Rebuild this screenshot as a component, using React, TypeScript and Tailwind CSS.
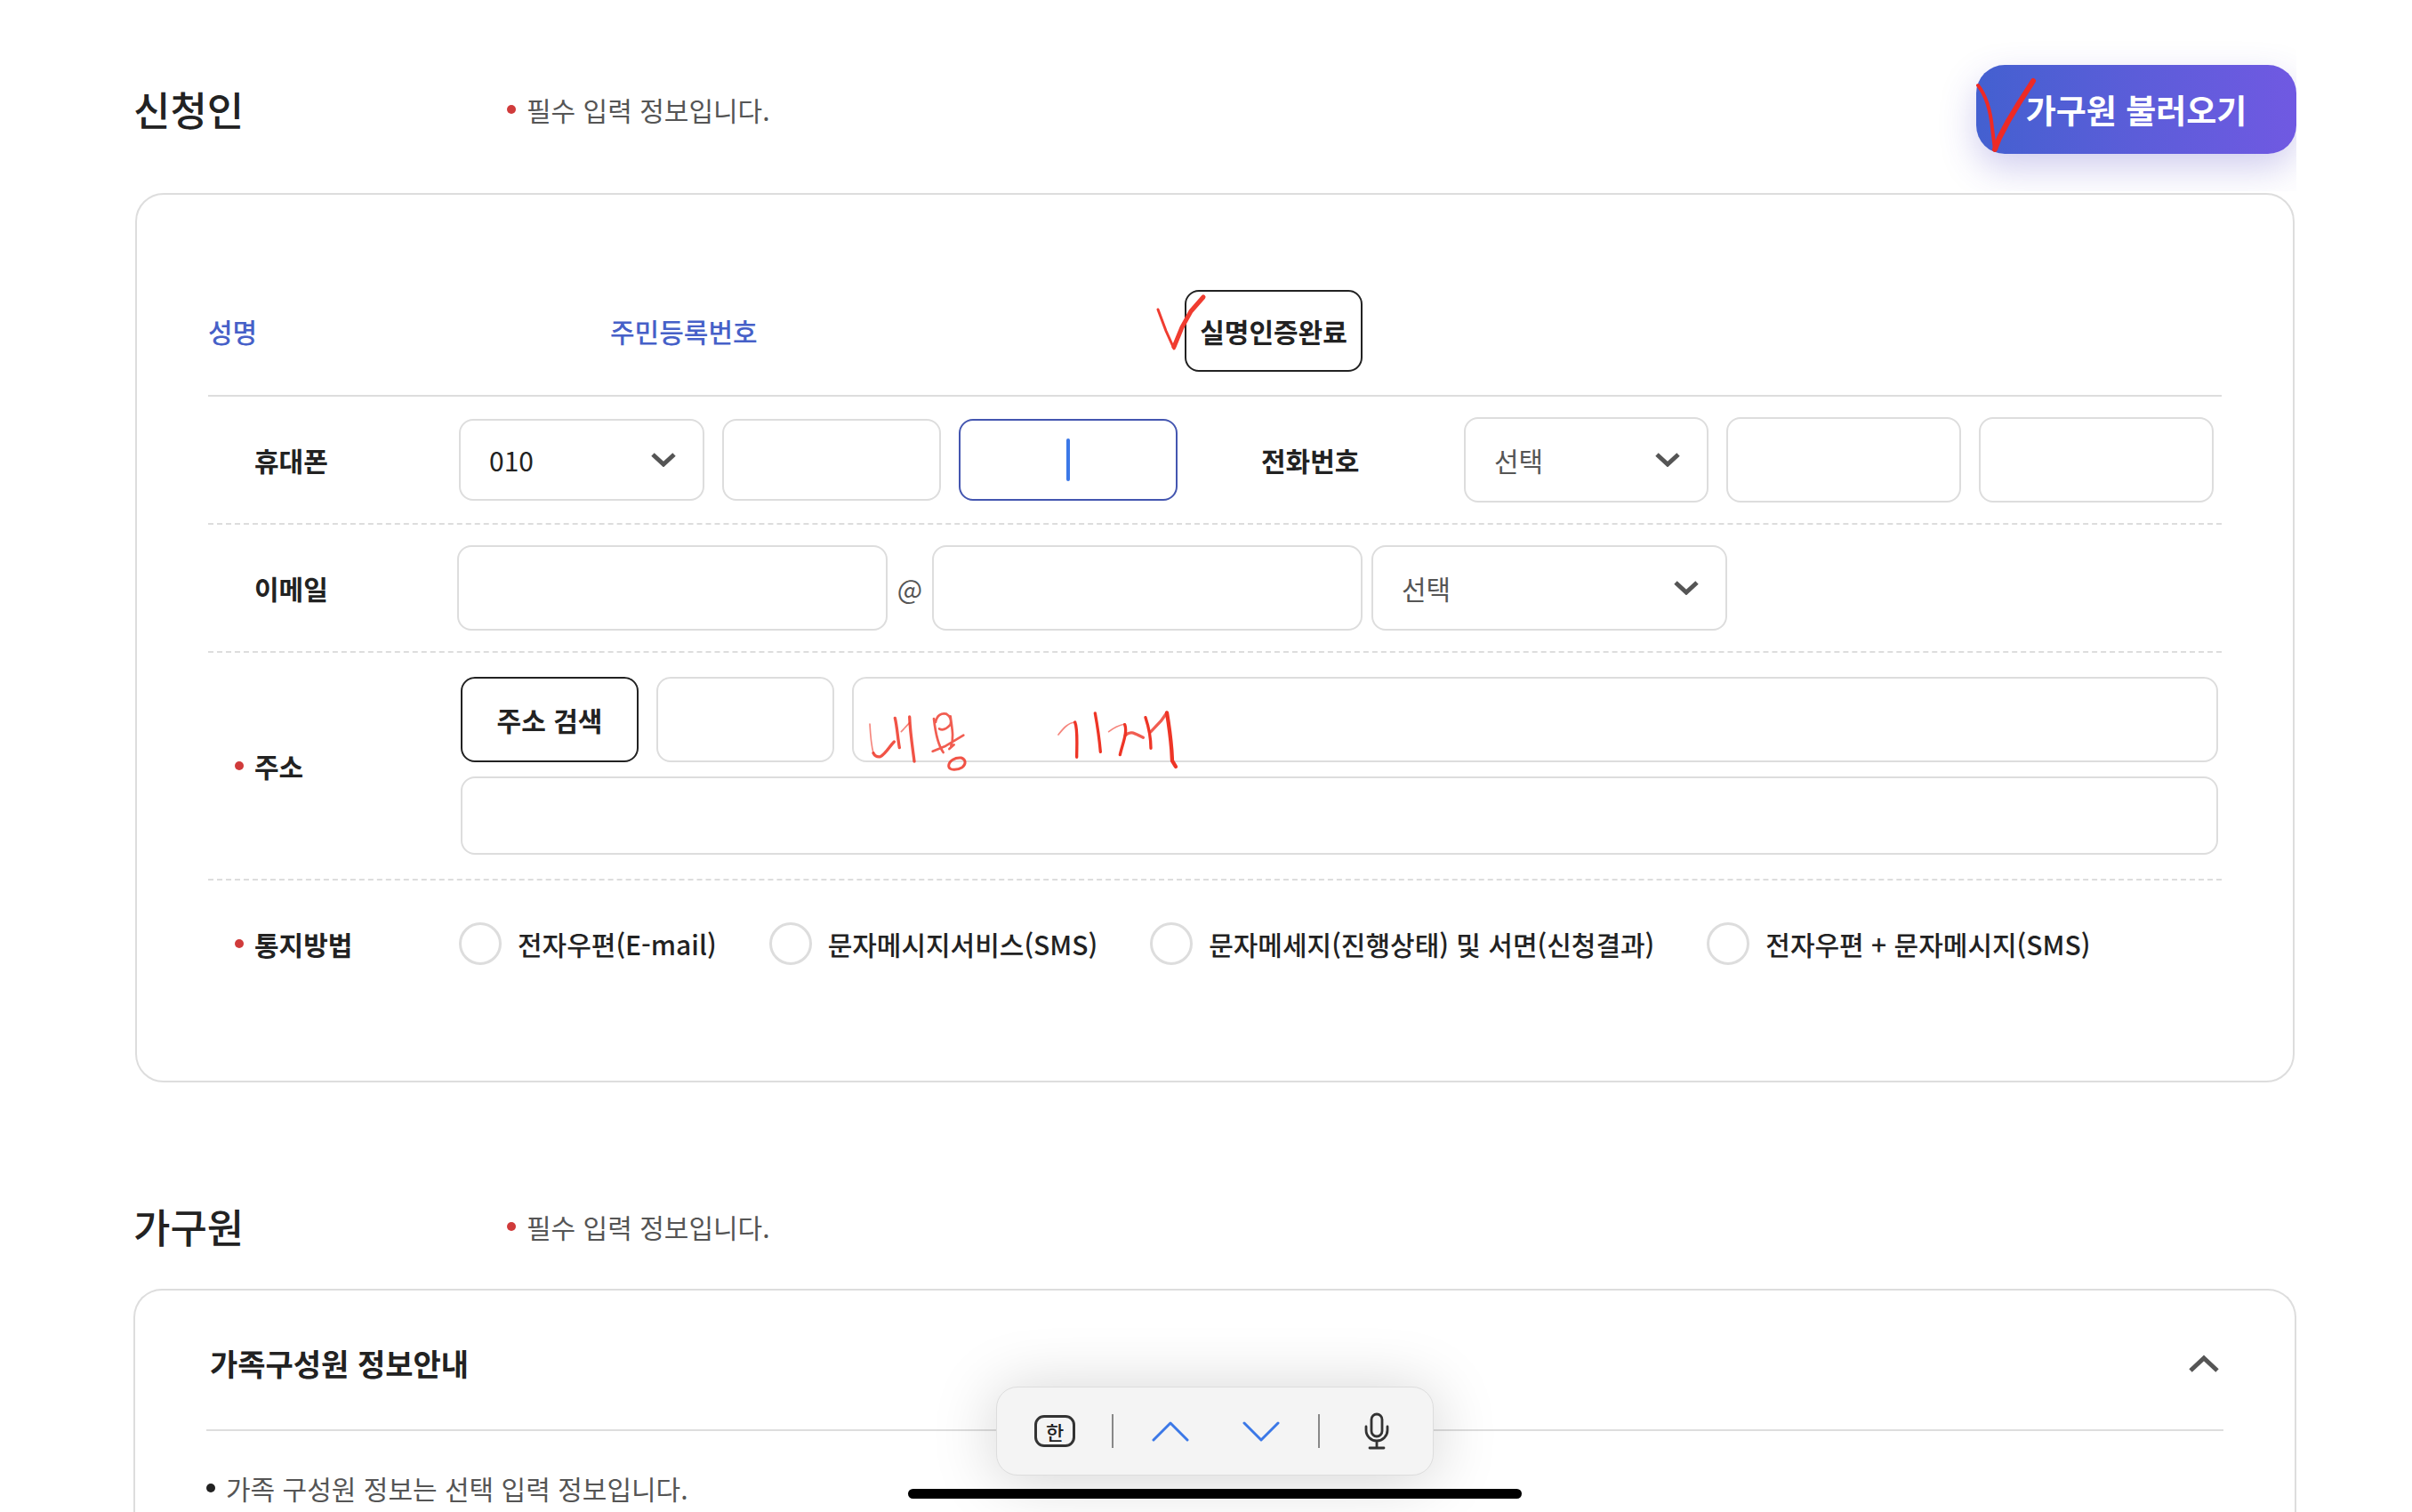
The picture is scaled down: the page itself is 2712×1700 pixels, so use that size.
import React from "react";

const box = "min-w-0 rounded-2xl border-2 border-[#ddd] bg-white px-8 text-[30px] text-[#222] outline-none";

function Chevron() {
  return (
    <svg viewBox="0 0 28 16" className="h-4 w-7" fill="none" stroke="#555" strokeWidth="5">
      <path d="M2 2 14 13 26 2" />
    </svg>
  );
}

function Select({ label, value, className, dark }: { label: string; value: string; className: string; dark?: boolean }) {
  return (
    <div className={`relative ${className}`}>
      <select
        aria-label={label}
        className={`h-full w-full appearance-none rounded-2xl border-2 border-[#ddd] bg-white pl-8 pr-20 text-[30px] ${dark ? "text-[#222]" : "text-[#555]"}`}
      >
        <option>{value}</option>
      </select>
      <span className="pointer-events-none absolute inset-y-0 right-8 flex items-center">
        <Chevron />
      </span>
    </div>
  );
}

function Label({ children, required, htmlFor, id }: { children: React.ReactNode; required?: boolean; htmlFor?: string; id?: string }) {
  return (
    <div className="flex w-[284px] shrink-0 items-center pl-[30px]">
      {required && <span className="mr-3 size-[10px] shrink-0 rounded-full bg-[#d03b3b]" />}
      <label id={id} htmlFor={htmlFor} className={required ? "font-bold" : "pl-[22px] font-bold"}>
        {children}
      </label>
    </div>
  );
}

function SectionTitle({ title }: { title: string }) {
  return (
    <>
      <h2 className="w-[420px] text-[45px] font-medium text-[#222]">{title}</h2>
      <p className="flex items-center gap-3 text-[30px] text-[#555]">
        <span className="size-[10px] rounded-full bg-[#d03b3b]" />
        필수 입력 정보입니다.
      </p>
    </>
  );
}

const methods = [
  "전자우편(E-mail)",
  "문자메시지서비스(SMS)",
  "문자메세지(진행상태) 및 서면(신청결과)",
  "전자우편 + 문자메시지(SMS)",
];

export default function App() {
  return (
    <main
      lang="ko"
      className="relative flex h-screen flex-col overflow-hidden bg-white pl-[150px] pr-[130px] font-['Noto_Sans_CJK_KR',sans-serif] text-[30px] leading-[44px] text-[#222]"
    >
      <header className="flex h-[215px] shrink-0 items-center overflow-hidden pt-[31px]">
        <SectionTitle title="신청인" />
        <button className="relative ml-auto h-[100px] w-[360px] rounded-[32px] bg-linear-to-r from-[#4360d0] to-[#7059e2] text-[37px] font-bold text-white shadow-[0_16px_40px_rgba(70,60,190,0.25)]">
          가구원 불러오기
          <svg viewBox="0 0 70 88" className="absolute left-0 top-[13px] h-[88px] w-[70px]" fill="none" stroke="#ee2a25" strokeLinecap="round" strokeLinejoin="round">
            <path d="M2 10C10 20 16 38 18 58L21 82" strokeWidth="4" />
            <path d="M21 82 26 69 36 50 48 30 64 5" strokeWidth="6" />
          </svg>
        </button>
      </header>

      <form className="mx-[2px] mt-[2px] flex h-[1000px] shrink-0 flex-col rounded-[32px] border-2 border-[#ddd] px-20">
        <div className="flex h-[227px] items-end border-b-2 border-[#ddd] pb-[26px]">
          <div className="flex h-[92px] w-full items-center font-medium text-[#4660c8]">
            <span className="w-[452px]">성명</span>
            <span className="w-[646px]">주민등록번호</span>
            <div className="relative">
              <button type="button" className="h-[92px] w-[200px] rounded-2xl border-2 border-[#222] text-[30px] font-bold text-[#222]">
                실명인증완료
              </button>
              <svg viewBox="0 0 60 68" className="absolute -left-[33px] top-1 h-[68px] w-[60px]" fill="none" stroke="#f03c30" strokeLinecap="round" strokeLinejoin="round">
                <path d="M3 18 12 42 21 62" strokeWidth="3" />
                <path d="M21 60 30 38 40 20 54 4" strokeWidth="5" />
              </svg>
            </div>
          </div>
        </div>

        <div className="flex h-[144px] items-center border-b-2 border-dashed border-[#ddd]">
          <Label>휴대폰</Label>
          <Select label="휴대폰 앞자리" value="010" dark className="-ml-[2px] h-[92px] w-[276px]" />
          <input aria-label="휴대폰 가운데 자리" className={`${box} ml-5 h-[92px] w-[246px]`} />
          <div className="relative ml-5">
            <input aria-label="휴대폰 끝자리" className="h-[92px] w-[246px] rounded-2xl border-2 border-[#4456b0] px-8 text-center outline-none" />
            <span className="pointer-events-none absolute inset-0 flex items-center justify-center">
              <span className="h-12 w-1 rounded-full bg-[#3b78e7]" />
            </span>
          </div>
          <span className="ml-[94px] w-[228px] font-bold">전화번호</span>
          <Select label="지역번호" value="선택" className="h-24 w-[275px]" />
          <input aria-label="전화번호 가운데 자리" className={`${box} ml-5 h-24 w-[264px]`} />
          <input aria-label="전화번호 끝자리" className={`${box} ml-5 h-24 w-[264px]`} />
        </div>

        <div className="flex h-[144px] items-center border-b-2 border-dashed border-[#ddd]">
          <Label htmlFor="email">이메일</Label>
          <input id="email" className={`${box} -ml-1 h-24 w-[484px]`} />
          <span className="w-[50px] text-center text-[#555]">@</span>
          <input aria-label="이메일 도메인" className={`${box} h-24 w-[484px]`} />
          <Select label="도메인 선택" value="선택" className="ml-[10px] h-24 w-[400px]" />
        </div>

        <div className="flex h-[256px] items-center border-b-2 border-dashed border-[#ddd]">
          <Label required htmlFor="addr">주소</Label>
          <div className="relative mr-1 flex flex-1 flex-col gap-4">
            <div className="flex gap-5">
              <button type="button" className="h-24 w-[200px] rounded-2xl border-2 border-[#222] font-bold">
                주소 검색
              </button>
              <input aria-label="우편번호" className={`${box} h-24 w-[200px]`} />
              <input id="addr" className={`${box} h-24 flex-1`} />
            </div>
            <input aria-label="상세 주소" className={`${box} h-[88px]`} />
            <svg
              viewBox="0 0 1170 300"
              role="img"
              aria-label="내용 기재"
              className="pointer-events-none absolute left-[442px] top-[19px] h-[100px] w-[390px]"
              fill="none"
              stroke="#ee3526"
              strokeWidth="10"
              strokeLinecap="round"
              strokeLinejoin="round"
            >
              <path strokeWidth="5" strokeOpacity="0.6" d="M54 102C56 140 58 170 66 200M160 128 188 98M690 138C706 118 722 98 746 96M860 128C880 112 896 106 914 102" />
              <path strokeOpacity="0.85" d="M66 200C72 212 80 214 90 212C108 202 120 178 136 162M139 82C146 110 148 150 154 182M188 78C190 130 198 180 204 228" />
              <path strokeWidth="8" strokeOpacity="0.8" d="M270 84C274 120 282 170 302 198M276 96C280 72 296 64 312 68C328 78 330 90 326 104C312 120 298 124 288 118M326 76C332 120 338 150 328 176M266 194 310 176 370 140M322 186 338 172" />
              <path strokeWidth="9" strokeOpacity="0.85" d="M320 244C320 226 342 214 362 216C380 222 378 238 366 248C350 258 322 260 320 244Z" />
              <path d="M746 96C756 120 752 170 752 214M814 66C822 110 828 150 832 196M914 104C924 130 906 170 898 206M984 80C994 110 1002 150 1002 184" />
              <path strokeOpacity="0.8" d="M916 140C936 122 950 136 976 148M1002 128 1036 92 1056 64" />
              <path strokeWidth="13" d="M1056 64C1062 100 1068 140 1072 190L1074 226 1086 246" />
            </svg>
          </div>
        </div>

        <div role="radiogroup" aria-labelledby="method-label" className="flex h-[142px] items-center">
          <Label required id="method-label">통지방법</Label>
          <div className="-ml-[2px] flex gap-[59px] whitespace-nowrap font-medium">
            {methods.map((m) => (
              <label key={m} className="flex items-center gap-[18px]">
                <input type="radio" name="method" className="size-12 appearance-none rounded-full border-[3px] border-[#ddd] bg-white" />
                {m}
              </label>
            ))}
          </div>
        </div>
      </form>

      <div className="mt-[110px] flex h-[104px] shrink-0 items-center">
        <SectionTitle title="가구원" />
      </div>

      <section className="mt-[18px] flex flex-1 flex-col rounded-t-[32px] border-2 border-b-0 border-[#ddd] px-20">
        <div className="flex h-[158px] shrink-0 items-center justify-between border-b-2 border-[#ddd] pt-2 pl-1 pr-[5px]">
          <h3 className="text-[34px] font-bold">가족구성원 정보안내</h3>
          <button type="button" aria-label="접기">
            <svg viewBox="0 0 34 20" className="h-5 w-[34px]" fill="none" stroke="#555" strokeWidth="5">
              <path d="M2 18 17 4 32 18" />
            </svg>
          </button>
        </div>
        <p className="mt-[42px] flex items-center gap-3 whitespace-nowrap text-[#555]">
          <span className="size-[10px] rounded-full bg-[#222]" />
          가족 구성원 정보는 선택 입력 정보입니다.
        </p>
      </section>

      <div className="absolute bottom-[15px] left-[150px] right-[130px] flex flex-col items-center gap-[15px]">
        <div className="flex h-[100px] w-[492px] items-center rounded-[24px] border border-[#ddd] bg-[#f4f4f4] pl-[42px] shadow-[0_4px_72px_rgba(0,0,0,0.18)]">
          <button type="button" aria-label="한글 키보드" className="flex h-9 w-[46px] items-center justify-center rounded-[11px] border-[3px] border-[#333] text-[22px] leading-none font-medium text-[#222]">
            한
          </button>
          <span className="ml-[41px] h-[38px] w-[2px] bg-[#888]" />
          <button type="button" aria-label="이전" className="ml-[43px]">
            <svg viewBox="0 0 42 24" className="h-6 w-[42px]" fill="none" stroke="#3b78e7" strokeWidth="3" strokeLinecap="round" strokeLinejoin="round">
              <path d="M2 22 21 3 40 22" />
            </svg>
          </button>
          <button type="button" aria-label="다음" className="ml-[60px]">
            <svg viewBox="0 0 42 24" className="h-6 w-[42px]" fill="none" stroke="#3b78e7" strokeWidth="3" strokeLinecap="round" strokeLinejoin="round">
              <path d="M2 3 21 22 40 3" />
            </svg>
          </button>
          <span className="ml-[43px] h-[38px] w-[2px] bg-[#888]" />
          <button type="button" aria-label="음성 입력" className="ml-[50px]">
            <svg viewBox="0 0 28 42" className="h-[42px] w-7" fill="none" stroke="#333" strokeWidth="2.8" strokeLinecap="round">
              <rect x="8" y="2" width="12" height="25" rx="6" />
              <path d="M2 16v4a12 12 0 0 0 24 0v-4M14 32v7M6 40h16" />
            </svg>
          </button>
        </div>
        <div className="h-[11px] w-[690px] rounded-full bg-black" />
      </div>
    </main>
  );
}
